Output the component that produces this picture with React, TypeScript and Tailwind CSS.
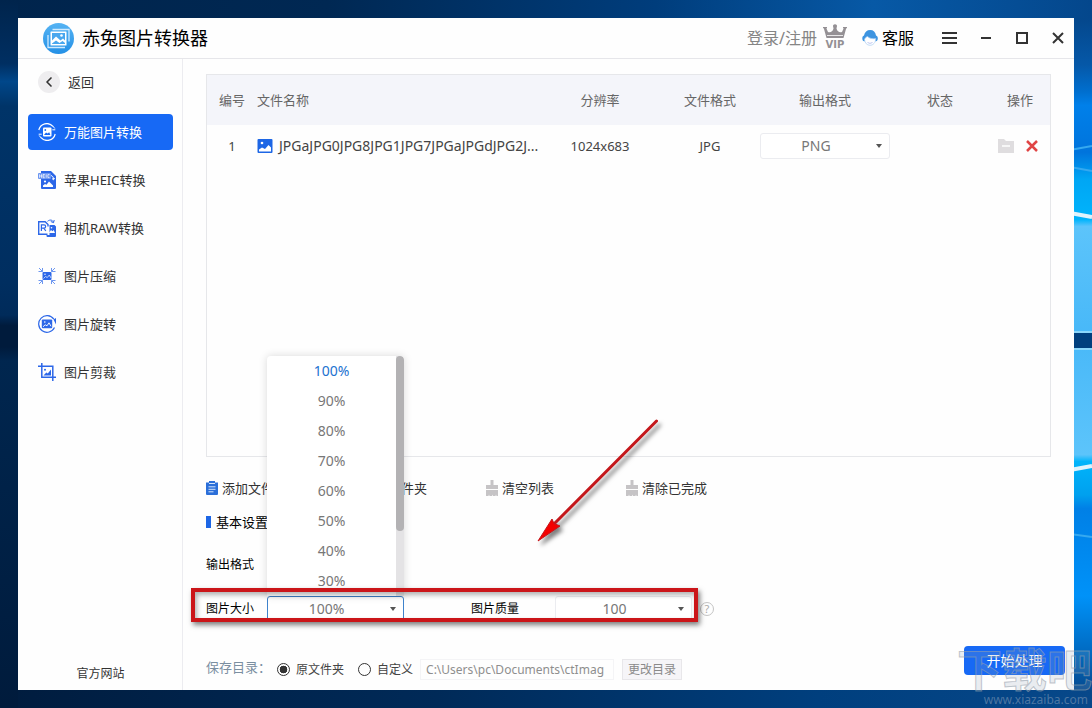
import { useState, type ReactNode } from 'react';
import { ChevronLeft } from 'lucide-react';

const sizes = ['100%', '90%', '80%', '70%', '60%', '50%', '40%', '30%'];

function ConvertIcon() {
  return (
    <svg viewBox="0 0 18 18" className="size-[18px]" fill="none" stroke="currentColor" strokeWidth="1.2">
      <path d="M.8 7A8.300 8.300 0 0 1 15 3.300M17.200 11A8.300 8.300 0 0 1 3 14.700" />
      <path d="M1.200 12.500l2 2.500M16.800 5.500l-2-2.500M17.300 6.800h-3M.700 11.200h3" strokeWidth="1" />
      <rect x="5" y="4.5" width="8.5" height="9" rx="1" fill="currentColor" stroke="none" />
      <path d="M6 12l2-2.6 1.6 1.2 1.6-1.4 1.2 2.8z" fill="#1769f5" stroke="none" />
      <circle cx="7.3" cy="7" r=".9" fill="#1769f5" stroke="none" />
    </svg>
  );
}

function HeicIcon() {
  return (
    <svg viewBox="0 0 18 18" className="size-[18px]" fill="#2c67e8">
      <path d="M3 0h10l5 5v12a1 1 0 0 1-1 1H4a1 1 0 0 1-1-1z" />
      <rect x="0" y="2" width="13" height="6" rx="1" fill="#6c96f1" />
      <path
        d="M1.500 3.300v3.500M3.500 3.300v3.500M1.500 5h2M6.800 3.500H5v3.200h1.800M5 5h1.500M8.200 3.300v3.500M11.500 3.600h-1.600v3h1.600"
        fill="none"
        stroke="#fff"
        strokeWidth=".7"
      />
      <path d="M13 4.500c1.800.6 2.500 1.800 2.500 3.800M14 7.500l1.500 1.300 1-1.800" fill="none" stroke="#fff" strokeWidth="1" />
      <path d="M5 16v-1.500l2-1.500 1.500.8 2.500-3.300 4 4V16z" fill="#fff" />
      <circle cx="7" cy="10.500" r="1.100" fill="#fff" />
    </svg>
  );
}

function RawIcon() {
  return (
    <svg viewBox="0 0 18 18" className="size-[18px]" fill="none" stroke="#2c67e8">
      <path d="M9.500 15.300H.7V2.700h6.500l2.800 2.800v2" strokeWidth="1.400" />
      <path d="M3.400 12V5.800H6a1.600 1.600 0 0 1 0 3.300H3.400M5.800 9.100l2 2.900" strokeWidth="1.200" />
      <path d="M9.500 2.300c2.500-2 5-1.500 6 1M12.800 2.500l2.700 1.200L16.200 1" strokeWidth="1" />
      <path d="M11.500 6H16.500l1.500 1.500V17a1 1 0 0 1-1 1H9.500a1 1 0 0 1-1-1v-1h3z" fill="#2c67e8" stroke="none" />
      <path d="M10.800 14l2.200-3 1.500 1.200 1.200-1.200 1.300 3z" fill="#fff" stroke="none" />
      <circle cx="13.500" cy="8.800" r=".8" fill="#fff" stroke="none" />
    </svg>
  );
}

function CompressIcon() {
  return (
    <svg viewBox="0 0 18 18" className="size-[18px]" fill="none" stroke="#6d97f0" strokeWidth="1">
      <path d="M1 1l3.500 3.500M4.500 1v3.500H.500M17 1l-3.500 3.500M13.500 1v3.500h4M1 17l3.500-3.500M4.500 17v-3.500H.500M17 17l-3.500-3.500M13.500 17v-3.500h4" />
      <rect x="4.500" y="5" width="9" height="8" rx="1" fill="#2c67e8" stroke="none" />
      <path d="M5.500 11.500l2-2 1.800 1 2-2.500 1.700 3" stroke="#dce7ff" strokeWidth=".8" />
      <circle cx="7" cy="7.200" r=".7" fill="#fff" stroke="none" />
    </svg>
  );
}

function RotateIcon() {
  return (
    <svg viewBox="0 0 18 18" className="size-[18px]" fill="none" stroke="#2c67e8" strokeWidth="1.2">
      <path d="M15.800 4.200A8.300 8.300 0 1 0 16.500 12.500" />
      <path d="M18 3v6.500l-2.500-5z" fill="#2c67e8" stroke="none" />
      <rect x="3.800" y="4.500" width="10.400" height="8.800" rx="1" fill="#2c67e8" stroke="none" />
      <path d="M5 11.800l2.200-2 1.800 1 2-3 2 3.500" stroke="#fff" strokeWidth=".9" />
      <circle cx="6.800" cy="7" r=".8" fill="#fff" stroke="none" />
    </svg>
  );
}

function CropIcon() {
  return (
    <svg viewBox="0 0 18 18" className="size-[18px]" fill="none" stroke="#2c67e8" strokeWidth="1.5">
      <path d="M3.800 0v14.200H18M0 3.300h14.800V18" />
      <path d="M5.500 12.500l2.800-3 1.500 1L13 6.500v6z" fill="#2c67e8" stroke="none" />
      <circle cx="7" cy="6.800" r="1" fill="#2c67e8" stroke="none" />
    </svg>
  );
}

const menu = [
  { label: '万能图片转换', Icon: ConvertIcon },
  { label: '苹果HEIC转换', Icon: HeicIcon },
  { label: '相机RAW转换', Icon: RawIcon },
  { label: '图片压缩', Icon: CompressIcon },
  { label: '图片旋转', Icon: RotateIcon },
  { label: '图片剪裁', Icon: CropIcon },
];

function Logo() {
  return (
    <svg viewBox="0 0 31 31" className="size-[31px]">
      <defs>
        <linearGradient id="logo" x1="0" y1="0" x2="0" y2="1">
          <stop offset="0" stopColor="#55b3f3" />
          <stop offset="1" stopColor="#2490e6" />
        </linearGradient>
      </defs>
      <circle cx="15.5" cy="15.5" r="15.5" fill="url(#logo)" />
      <path d="M9.500 6.500H26v12M5 12v12.500h17" fill="none" stroke="#cfeaff" strokeWidth="1.3" />
      <rect x="7.500" y="8.500" width="16" height="14" rx=".5" fill="#fff" />
      <path d="M9 10h13v7.500l-2-2-2.500 2-4.500-4-4 4z" fill="#49a7ee" />
      <path d="M9 21v-.5l4-3 3.500 2.500 3-2 2.500 2v1z" fill="#49a7ee" />
      <circle cx="18.500" cy="12.500" r="1.3" fill="#fff" />
    </svg>
  );
}

function VipIcon() {
  return (
    <svg viewBox="0 0 26 26" className="mb-1 size-[26px]" fill="#949094">
      <path d="M1 4h4v1.300H4.300L6 9c2.300 1 4.700-.3 5.500-3.500L11.200 4a2 2 0 1 1 3.600 0l-.3 1.500C15.300 8.700 17.700 10 20 9l1.700-3.700H21V4h4v1.300h-.8L21.500 15h-17L1.800 5.300H1z" />
      <path d="M5 12.500h16" stroke="#fefefe" strokeWidth=".8" />
      <text x="13" y="25" textAnchor="middle" fontFamily="DejaVu Sans" fontWeight="700" fontSize="10">
        VIP
      </text>
    </svg>
  );
}

function ServiceIcon() {
  return (
    <svg viewBox="0 0 16 16" className="size-4">
      <path d="M2 5.500C2.600 2 5 0 8.200 0S13.600 2 14 5.500c1.200.4 1.800 1.400 1.800 2.900 0 1.600-.8 2.600-1.900 2.800H2.100C1 11 .3 10 .3 8.400.3 6.900.9 5.900 2 5.500z" fill="#3d94e0" />
      <path d="M2.500 9.500C3 8 4 7 5.500 6.500 7.500 8.500 10.500 9 13.700 8.500c0 4-2.500 6.800-5.700 6.800-3 0-5.200-2.300-5.500-5.800z" fill="#fff" stroke="#a9cdf2" strokeWidth=".7" />
      <path d="M5.500 12.500q2.500 1.800 5 0" fill="none" stroke="#b4c0ee" strokeWidth=".9" />
    </svg>
  );
}

function BrushIcon() {
  return (
    <svg viewBox="0 0 12 16" className="h-4 w-3" fill="#c6c4c6">
      <path d="M4.500 0h3v5H12v4H0V5h4.500z" />
      <path d="M0 10h12v6h-1.500l-.5-1.500-.5 1.500H7l-.5-1.500L6 16H3.500L3 14.500 2.500 16H0z" />
    </svg>
  );
}

function ClipboardIcon() {
  return (
    <svg viewBox="0 0 12 14" className="h-3.5 w-3" fill="#2b6fd9">
      <path d="M0 1.500h3V0h6v1.500h3V13a1 1 0 0 1-1 1H1a1 1 0 0 1-1-1z" />
      <path d="M3 2.500h6M2.500 5.800h7M2.500 8.300h7M2.500 10.800h5" stroke="#d5e5fb" strokeWidth="1" />
    </svg>
  );
}

const actions: { label: string; icon: ReactNode }[] = [
  { label: '添加文件', icon: <ClipboardIcon /> },
  { label: '添加文件夹', icon: <ClipboardIcon /> },
  { label: '清空列表', icon: <BrushIcon /> },
  { label: '清除已完成', icon: <BrushIcon /> },
];

function SelectBox({ id, label, value, className }: { id: string; label?: string; value: string; className: string }) {
  return (
    <div className="grid items-center">
      <select
        id={id}
        aria-label={label}
        defaultValue={value}
        className={`col-start-1 row-start-1 h-[26px] appearance-none rounded-[3px] border bg-white pr-[18px] text-center text-sm leading-5 text-[#777] outline-none ${className}`}
      >
        <option>{value}</option>
      </select>
      <svg viewBox="0 0 6 4" className="pointer-events-none col-start-1 row-start-1 mr-2 h-1 w-1.5 justify-self-end" fill="#555">
        <path d="M0 0h6L3 4z" />
      </svg>
    </div>
  );
}

function Wallpaper() {
  return (
    <svg viewBox="0 0 1092 708" preserveAspectRatio="none" className="absolute inset-0 h-full w-full">
      <defs>
        <linearGradient id="top" x1="0" x2="1" y1="0" y2="0">
          <stop offset="0" stopColor="#00244c" />
          <stop offset=".3" stopColor="#002853" />
          <stop offset=".6" stopColor="#003d7c" />
          <stop offset=".8" stopColor="#0759a6" />
          <stop offset="1" stopColor="#04478c" />
        </linearGradient>
        <linearGradient id="left" x1="0" x2="0" y1="0" y2="1">
          <stop offset="0" stopColor="#00244c" />
          <stop offset=".09" stopColor="#002f62" />
          <stop offset=".115" stopColor="#00478a" />
          <stop offset=".15" stopColor="#003468" />
          <stop offset=".4" stopColor="#002e60" />
          <stop offset=".445" stopColor="#002b5a" />
          <stop offset=".46" stopColor="#001b3c" />
          <stop offset=".49" stopColor="#001b3c" />
          <stop offset=".51" stopColor="#00264f" />
          <stop offset="1" stopColor="#001b3c" />
        </linearGradient>
        <linearGradient id="bottom" x1="0" x2="1" y1="0" y2="0">
          <stop offset="0" stopColor="#001c3e" />
          <stop offset=".4" stopColor="#002a58" />
          <stop offset=".75" stopColor="#003f7e" />
          <stop offset="1" stopColor="#07488a" />
        </linearGradient>
        <linearGradient id="right" x1="0" x2="0" y1="0" y2="1">
          <stop offset="0" stopColor="#04478c" />
          <stop offset=".07" stopColor="#0558a8" />
          <stop offset=".11" stopColor="#006fcf" />
          <stop offset=".13" stopColor="#0080ea" />
          <stop offset=".2" stopColor="#0074dc" />
          <stop offset=".24" stopColor="#00a6f4" />
          <stop offset=".3" stopColor="#00b4fc" />
          <stop offset=".31" stopColor="#5cc4fb" />
          <stop offset=".47" stopColor="#48b8f8" />
          <stop offset=".65" stopColor="#5cc4fb" />
          <stop offset=".66" stopColor="#00b4fb" />
          <stop offset=".71" stopColor="#00a0ee" />
          <stop offset=".73" stopColor="#0080e6" />
          <stop offset=".86" stopColor="#0092f8" />
          <stop offset=".94" stopColor="#006cc4" />
          <stop offset="1" stopColor="#054a90" />
        </linearGradient>
      </defs>
      <path fill="url(#top)" d="M0 0h1092v40H0z" />
      <path fill="url(#bottom)" d="M0 680h1092v28H0z" />
      <path fill="url(#left)" d="M0 0h18v708H0z" />
      <path fill="url(#right)" d="M1070 18h22v672h-22z" />
      <path d="M1070 150l22-4M1070 167l22 4M1070 534l22 3" stroke="#35a9f0" strokeWidth="2" />
      <path d="M1070 213l22 4M1070 470l22-4" stroke="#dff3fc" strokeWidth="4" />
      <path fill="#003f7e" d="M1070 333h22v15h-22z" />
      <path d="M1070 332h22M1070 349h22" stroke="#8ad6fa" strokeWidth="2" />
    </svg>
  );
}

function Header() {
  return (
    <header className="flex h-[41px] items-center border-b border-[#e6e6ea] pr-2.5 pl-[25px] text-black">
      <Logo />
      <h1 className="ml-2 text-lg leading-6">赤兔图片转换器</h1>
      <a href="#login" className="mr-[5px] ml-auto text-base leading-6 text-[#858585]">
        登录/注册
      </a>
      <VipIcon />
      <a href="#service" className="ml-3.5 flex items-center gap-1 text-base leading-6">
        <ServiceIcon />
        客服
      </a>
      <button aria-label="菜单" className="ml-7 text-[#333]">
        <svg viewBox="0 0 15 12" className="h-3 w-[15px]" stroke="currentColor" strokeWidth="2">
          <path d="M0 1h15M0 6h15M0 11h15" />
        </svg>
      </button>
      <div className="ml-[23px] flex items-center gap-6 text-[#333]">
        <button aria-label="最小化">
          <svg viewBox="0 0 12 12" className="size-3" stroke="currentColor" strokeWidth="2">
            <path d="M1 6h10" />
          </svg>
        </button>
        <button aria-label="最大化">
          <svg viewBox="0 0 12 12" className="size-3" fill="none" stroke="currentColor" strokeWidth="2">
            <path d="M1 1h10v10H1z" />
          </svg>
        </button>
        <button aria-label="关闭">
          <svg viewBox="0 0 12 12" className="size-3" stroke="currentColor" strokeWidth="2">
            <path d="M1 1l10 10M11 1L1 11" />
          </svg>
        </button>
      </div>
    </header>
  );
}

function Sidebar() {
  return (
    <aside className="flex w-[165px] shrink-0 flex-col border-r border-[#ececf0] pt-3 pr-[9px] pl-2.5">
      <button className="flex items-center gap-2 pl-2.5 text-[13px] leading-5 text-[#333]">
        <span className="flex size-[22px] items-center justify-center rounded-full bg-[#eeedef]">
          <ChevronLeft className="size-4" strokeWidth={2.5} />
        </span>
        返回
      </button>
      <nav className="mt-[21px] flex flex-col gap-3">
        {menu.map(({ label, Icon }, index) => (
          <button
            key={label}
            className={`flex h-9 items-center gap-2 rounded-[4px] pl-2.5 text-[13px] leading-5 ${
              index === 0 ? 'bg-[#1769f5] text-white' : 'text-[#333]'
            }`}
          >
            <Icon />
            {label}
          </button>
        ))}
      </nav>
      <a href="#site" className="mt-auto mb-1.5 text-center text-xs leading-5 text-[#333]">
        官方网站
      </a>
    </aside>
  );
}

function FileTable() {
  return (
    <div className="flex-1 border border-[#e6e7ea]">
      <table className="w-full table-fixed text-center text-[13px] leading-5">
        <thead className="h-[50px] bg-[#f4f5fa] text-[#666]">
          <tr>
            <th className="w-[50px] font-normal">编号</th>
            <th className="text-left font-normal">文件名称</th>
            <th className="w-[120px] font-normal">分辨率</th>
            <th className="w-[100px] font-normal">文件格式</th>
            <th className="w-[130px] font-normal">输出格式</th>
            <th className="w-[100px] font-normal">状态</th>
            <th className="w-[60px] font-normal">操作</th>
          </tr>
        </thead>
        <tbody className="text-[#444]">
          <tr className="h-[42px]">
            <td>1</td>
            <td>
              <div className="flex items-center gap-1.5 text-sm leading-5 whitespace-nowrap">
                <svg viewBox="0 0 16 16" className="size-4 shrink-0">
                  <rect x=".5" y="1" width="15" height="14" rx="1" fill="#1d66e5" />
                  <path d="M2 13.500v-2l3-2 3 1.500L11.500 7 14 9.500v4z" fill="#fff" />
                  <circle cx="5" cy="5" r="1.3" fill="#fff" />
                </svg>
                JPGaJPG0JPG8JPG1JPG7JPGaJPGdJPG2J...
              </div>
            </td>
            <td>1024x683</td>
            <td>JPG</td>
            <td>
              <SelectBox id="row-format" label="输出格式" value="PNG" className="w-full border-[#ebecf0]" />
            </td>
            <td></td>
            <td>
              <div className="flex items-center gap-3 pl-2">
                <button aria-label="打开文件夹">
                  <svg viewBox="0 0 16 14" className="h-3.5 w-4">
                    <path d="M0 0h6l2 2h8v12H0z" fill="#dfdddf" />
                    <path d="M4 7h8" stroke="#fff" strokeWidth="1.5" />
                  </svg>
                </button>
                <button aria-label="删除">
                  <svg viewBox="0 0 12 12" className="size-3" stroke="#e04545" strokeWidth="2.5">
                    <path d="M1 1l10 10M11 1L1 11" />
                  </svg>
                </button>
              </div>
            </td>
          </tr>
        </tbody>
      </table>
    </div>
  );
}

function SizeOptions() {
  return (
    <div className="absolute bottom-full left-0 z-10 flex w-full overflow-hidden rounded-t-[4px] bg-white shadow-[0_0_8px_rgba(0,0,0,0.15)]">
      <ul role="listbox" aria-label="图片大小" className="flex-1 text-center text-sm leading-[30px] text-[#777]">
        {sizes.map((size, index) => (
          <li key={size} role="option" aria-selected={index === 0} className={index === 0 ? 'text-[#2272d0]' : ''}>
            {size}
          </li>
        ))}
      </ul>
      <div className="w-2 bg-[#e4e3e5]">
        <div className="h-[175px] rounded-full bg-[#b3b2b4]" />
      </div>
    </div>
  );
}

function Settings() {
  return (
    <section className="text-xs leading-5 text-black">
      <h2 className="mt-3.5 flex items-center gap-[5px] text-[13px] leading-5">
        <span className="h-3 w-[5px] bg-[#1d66e5]" />
        基本设置
      </h2>
      <div className="mt-5 flex h-[26px] items-center">输出格式</div>
      <div className="mt-[18px] flex items-center gap-2">
        <div className="relative flex items-center">
          <label htmlFor="size" className="w-[61px]">
            图片大小
          </label>
          <div className="relative">
            <SizeOptions />
            <SelectBox id="size" value="100%" className="w-[137px] border-[#3f83cc]" />
          </div>
          <label htmlFor="quality" className="ml-[67px] w-[84px]">
            图片质量
          </label>
          <SelectBox id="quality" value="100" className="w-[137px] border-[#ebecf0]" />
          {/* highlight frame and pointer */}
          <div className="pointer-events-none absolute -top-2 -right-1.5 bottom-0 -left-[15px] z-20 border-4 border-[#cb1519] shadow-[2px_3px_5px_rgba(0,0,0,0.5),inset_2px_3px_5px_rgba(0,0,0,0.3)]" />
          <svg viewBox="0 0 140 140" className="pointer-events-none absolute bottom-[70px] left-[324px] z-20 size-[140px] drop-shadow-[3px_4px_2px_rgba(0,0,0,0.5)]">
            <path d="M126.500 9L22 114" stroke="#c4171b" strokeWidth="3" strokeLinecap="round" />
            <path d="M8 129l14-22 2 4.500 6 2.500z" fill="#f40000" stroke="#c4171b" />
          </svg>
        </div>
        <button aria-label="帮助" className="flex size-3.5 items-center justify-center rounded-full border border-[#c4c4c4] text-[11px] leading-3 text-[#aaa]">
          ?
        </button>
      </div>
    </section>
  );
}

function Footer() {
  const [target, setTarget] = useState('source');
  const radio =
    'mr-1.5 size-[13px] appearance-none rounded-full border border-[#333] checked:bg-[radial-gradient(circle_closest-side,#333_65%,transparent_75%)]';

  return (
    <footer className="-mr-3.5 mt-6 mb-2.5 flex h-[34px] justify-between">
      <div className="flex h-[21px] items-center self-end text-xs leading-5 text-[#444]">
        <span className="mr-1.5 self-start text-[13px] leading-4 text-[#7b8fa1]">保存目录：</span>
        <label className="mr-3.5 flex items-center">
          <input type="radio" name="target" className={radio} checked={target === 'source'} onChange={() => setTarget('source')} />
          原文件夹
        </label>
        <label className="mr-[7px] flex items-center">
          <input type="radio" name="target" className={radio} checked={target === 'custom'} onChange={() => setTarget('custom')} />
          自定义
        </label>
        <input
          aria-label="目录"
          readOnly
          value="C:\Users\pc\Documents\ctImag"
          className="h-[21px] w-[194px] border border-[#f4f4f6] px-[5px] text-xs text-[#8e8e8e]"
        />
        <button className="ml-2 h-[21px] w-[60px] border border-[#e8e7ea] bg-[#f6f5f8] leading-4 text-[#8a8a8a]">更改目录</button>
      </div>
      <button className="h-[29px] w-[101px] rounded-[4px] bg-[#1769f5] text-sm leading-5 text-white">开始处理</button>
    </footer>
  );
}

export default function App() {
  return (
    <div className="relative flex min-h-screen flex-col overflow-hidden bg-[#00244c] p-[18px] font-['Noto_Sans','Noto_Sans_CJK_SC',sans-serif]">
      <Wallpaper />
      <div className="relative flex flex-1 flex-col bg-[#fefefe]">
        <Header />
        <div className="flex flex-1">
          <Sidebar />
          <main className="flex min-w-0 flex-1 flex-col px-[23px] pt-[15px]">
            <FileTable />
            <div className="mt-[21px] flex">
              {actions.map(({ label, icon }) => (
                <button key={label} className="flex w-[140px] items-center gap-1 text-[13px] leading-5 text-[#333]">
                  {icon}
                  {label}
                </button>
              ))}
            </div>
            <Settings />
            <Footer />
          </main>
        </div>
      </div>
      <div className="pointer-events-none absolute right-0 bottom-0 flex flex-col items-end">
        <span className="text-[45px] leading-[44px] font-bold text-[#8fa0b4]/20 [-webkit-text-stroke:1px_rgba(150,160,172,0.6)]">下载吧</span>
        <span className="pr-1 text-xs leading-4 text-[#7d97b5]/60">www.xiazaiba.com</span>
      </div>
    </div>
  );
}
